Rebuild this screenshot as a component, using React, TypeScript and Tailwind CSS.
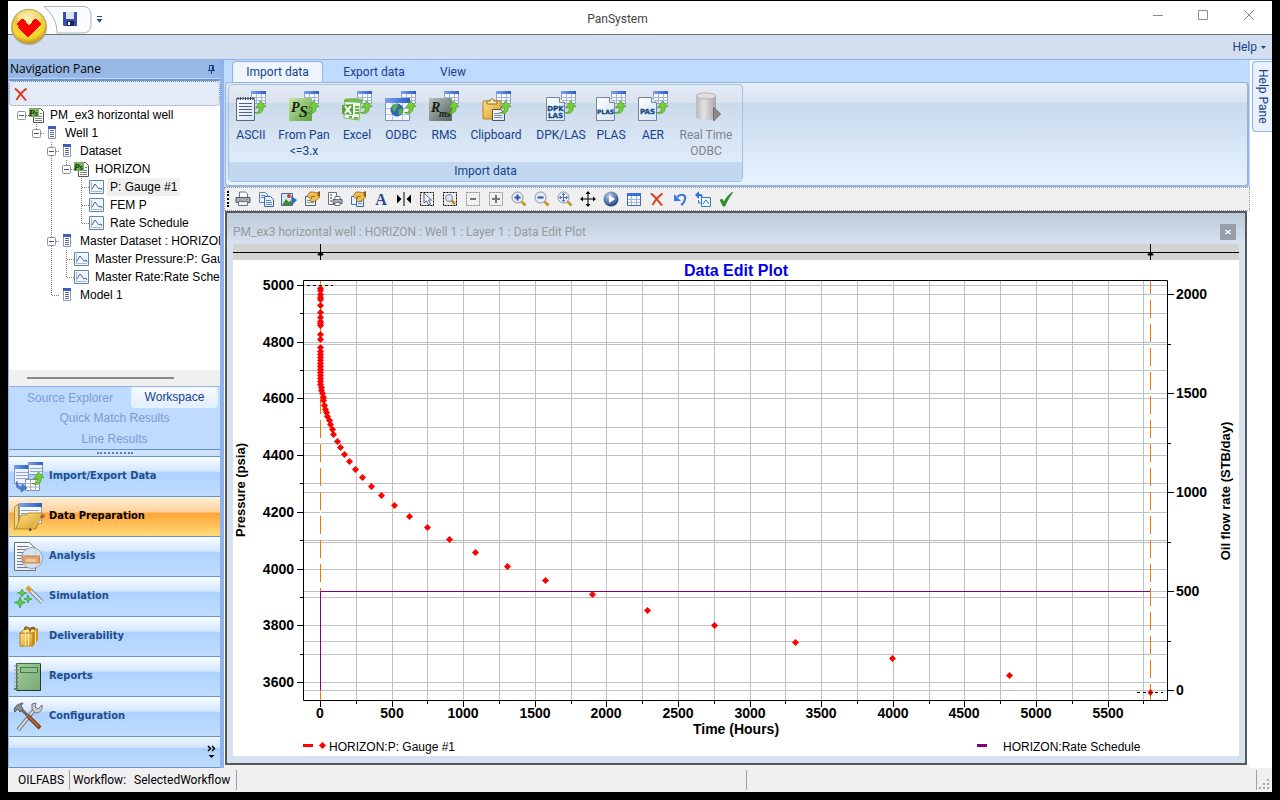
import type { ReactNode } from "react";
import clsx from "clsx";

const UI = "font-['Roboto','Noto_Sans',sans-serif]";
const ARIAL = "font-['Liberation_Sans',Arial,sans-serif]";

type IconProps = { children: ReactNode; size?: number; className?: string };

function Svg({ children, size = 16, className }: IconProps) {
  return (
    <svg
      viewBox={`0 0 ${size} ${size}`}
      width={size}
      height={size}
      aria-hidden="true"
      className={clsx("block shrink-0", className)}
    >
      {children}
    </svg>
  );
}

/* ---------- shared gradients ---------- */

function Gradients() {
  return (
    <svg width="0" height="0" className="absolute" aria-hidden="true">
      <defs>
        <radialGradient id="orb" cx="0.45" cy="0.3" r="0.7">
          <stop offset="0" stopColor="#fff3a8" />
          <stop offset="0.45" stopColor="#e9c93c" />
          <stop offset="0.75" stopColor="#f4d92c" />
          <stop offset="1" stopColor="#c98f1c" />
        </radialGradient>
        <linearGradient id="green" x1="0" y1="0" x2="1" y2="1">
          <stop offset="0" stopColor="#c4e6a4" />
          <stop offset="1" stopColor="#5da042" />
        </linearGradient>
        <linearGradient id="slate" x1="0" y1="0" x2="1" y2="1">
          <stop offset="0" stopColor="#b4c0bc" />
          <stop offset="1" stopColor="#53635e" />
        </linearGradient>
        <linearGradient id="gold" x1="0" y1="0" x2="1" y2="1">
          <stop offset="0" stopColor="#ffe28a" />
          <stop offset="1" stopColor="#d79a1c" />
        </linearGradient>
        <linearGradient id="sheet" x1="0" y1="0" x2="1" y2="1">
          <stop offset="0" stopColor="#ffffff" />
          <stop offset="1" stopColor="#d5e2f3" />
        </linearGradient>
        <linearGradient id="head" x1="0" y1="0" x2="1" y2="0">
          <stop offset="0" stopColor="#7ba2ee" />
          <stop offset="1" stopColor="#2c5cc6" />
        </linearGradient>
        <linearGradient id="drum" x1="0" y1="0" x2="1" y2="0">
          <stop offset="0" stopColor="#b9b9b9" />
          <stop offset="0.4" stopColor="#e2e2e2" />
          <stop offset="1" stopColor="#a5a5a5" />
        </linearGradient>
        <linearGradient id="notebook" x1="0" y1="0" x2="1" y2="1">
          <stop offset="0" stopColor="#a3cb9b" />
          <stop offset="1" stopColor="#79a878" />
        </linearGradient>
        <radialGradient id="ball" cx="0.4" cy="0.3" r="0.7">
          <stop offset="0" stopColor="#bcd0ec" />
          <stop offset="1" stopColor="#1f427e" />
        </radialGradient>
      </defs>
    </svg>
  );
}

/* ---------- ribbon icons, 32 x 32 ---------- */

function TableBack() {
  return (
    <>
      <path d="M16.500 1.500h14v12h-14z" fill="#f4f8ff" stroke="#8d9fc4" />
      <path d="M16 1h15v3H16z" fill="url(#head)" />
      <path d="M16 7.500h15M16 10.500h15M21.500 4v10M26.500 4v10" stroke="#a7b4d2" fill="none" />
    </>
  );
}

function GreenArrow() {
  return (
    <path
      d="M19.500 22.500c4 .5 5-1.500 4.700-5l-3.700.5 5-7 5.500 5.500-3 .5c.5 5-3 8-8.500 5.500z"
      fill="#76d035"
      stroke="#3f9420"
      strokeWidth="0.7"
    />
  );
}

function Page({ lines }: { lines: string[] }) {
  return (
    <>
      <path d="M1.500 7.500h13l5 5v18h-18z" fill="url(#sheet)" stroke="#74849b" />
      <path d="M14.500 7.500v5h5" fill="#e6edf8" stroke="#74849b" />
      {lines.map((line, i) => (
        <text
          key={line}
          x="10.500"
          y={lines.length > 1 ? 21 + i * 7 : 24}
          textAnchor="middle"
          fontFamily="DejaVu Sans, sans-serif"
          fontWeight="700"
          fontSize={line.length > 3 ? 6 : 7}
          fill="#0c4a7e"
          stroke="#0c4a7e"
          strokeWidth="0.3"
        >
          {line}
        </text>
      ))}
    </>
  );
}

function Badge({ fill, first, rest }: { fill: string; first: string; rest: string }) {
  return (
    <>
      <rect x="1" y="8" width="23" height="23" rx="1" fill={fill} />
      <text x="3" y="22" fontFamily="Liberation Serif, serif" fontStyle="italic" fontWeight="700" fontSize="14" fill="#142016">
        {first}
      </text>
      <text x="11" y="27" fontFamily="Liberation Serif, serif" fontStyle="italic" fontWeight="700" fontSize={rest.length > 1 ? 10 : 16} fill="#142016">
        {rest}
      </text>
    </>
  );
}

const ribbonItems: { lines: string[]; width: string; disabled?: boolean; icon: ReactNode }[] = [
  {
    lines: ["ASCII"],
    width: "w-9",
    icon: (
      <>
        <TableBack />
        <path d="M1.500 8.500h18v22h-18z" fill="url(#sheet)" stroke="#5a6880" />
        <path d="M3 7v3M5.500 7v3M8 7v3M10.500 7v3M13 7v3M15.500 7v3M18 7v3" stroke="#33435e" />
        <path d="M4 13.500h13M4 16.500h13M4 19.500h13M4 22.500h13M4 25.500h13" stroke="#4f6183" />
        <GreenArrow />
      </>
    ),
  },
  {
    lines: ["From Pan", "<=3.x"],
    width: "w-[70px]",
    icon: (
      <>
        <TableBack />
        <Badge fill="url(#green)" first="P" rest="S" />
        <GreenArrow />
      </>
    ),
  },
  {
    lines: ["Excel"],
    width: "w-9",
    icon: (
      <>
        <TableBack />
        <path d="M4 9l16 2-2 19-15-2z" fill="#eef7e8" stroke="#7ab860" />
        <path d="M3 10c6-3 12-1 19-1l-1 4-18-1z" fill="#73b851" />
        <path d="M1 15l11-1v11L1 24z" fill="#5aa43c" />
        <path d="M4 16l6 8M10 16l-6 7" stroke="#fff" strokeWidth="2" />
        <path d="M14 17h4M14 20h4M14 23h4M8 27h3M13 28h4" stroke="#6cae4b" strokeWidth="2" />
        <GreenArrow />
      </>
    ),
  },
  {
    lines: ["ODBC"],
    width: "w-[52px]",
    icon: (
      <>
        <TableBack />
        <path d="M.5 8.500h24v22H.5z" fill="#f1f5fc" stroke="#8493b2" />
        <path d="M0 8h25v5H0z" fill="url(#head)" />
        <path d="M1 18.500h23M1 24.500h23M7.500 13v17M17.500 13v17" stroke="#b7c4dc" />
        <circle cx="12" cy="20" r="6.500" fill="#2f62b8" />
        <path d="M7 17c2-4 5-4 6-2s-2 2-2 4-2 3-3 2zM13 20l4-2 1 4-4 4z" fill="#56b23a" />
        <GreenArrow />
      </>
    ),
  },
  {
    lines: ["RMS"],
    width: "w-[34px]",
    icon: (
      <>
        <TableBack />
        <Badge fill="url(#slate)" first="R" rest="ms" />
        <GreenArrow />
      </>
    ),
  },
  {
    lines: ["Clipboard"],
    width: "w-[70px]",
    icon: (
      <>
        <TableBack />
        <rect x="3" y="11" width="18" height="18" rx="1" fill="url(#gold)" stroke="#b77e18" />
        <path d="M7 14v-3h3c0-3 4-3 4 0h3v3z" fill="#efe3b6" stroke="#8b7428" />
        <path d="M12.500 19.500h8l4 4v7h-12z" fill="url(#sheet)" stroke="#4c5463" />
        <path d="M14 23.500h6M14 25.500h8M14 27.500h8" stroke="#7c8ca6" />
        <GreenArrow />
      </>
    ),
  },
  { lines: ["DPK/LAS"], width: "w-[60px]", icon: (<><TableBack /><Page lines={["DPK", "LAS"]} /><GreenArrow /></>) },
  { lines: ["PLAS"], width: "w-10", icon: (<><TableBack /><Page lines={["PLAS"]} /><GreenArrow /></>) },
  { lines: ["AER"], width: "w-11", icon: (<><TableBack /><Page lines={["PAS"]} /><GreenArrow /></>) },
  {
    lines: ["Real Time", "ODBC"],
    width: "w-[62px]",
    disabled: true,
    icon: (
      <>
        <path d="M6 6v21c0 4 20 4 20 0V6z" fill="url(#drum)" />
        <ellipse cx="16" cy="6" rx="10" ry="3" fill="#dedede" stroke="#b4b4b4" />
        <path d="M23.500 17v14l7-7z" fill="#8a8a8a" stroke="#6f6f6f" />
      </>
    ),
  },
];

/* ---------- tool strip icons, 16 x 16 ---------- */

function Loupe({ children }: { children: ReactNode }) {
  return (
    <>
      <path d="M10.500 10.500l4 4" stroke="#c99a2c" strokeWidth="3" />
      <circle cx="6.500" cy="6.500" r="5.500" fill="#e4edfb" stroke="#8792a8" />
      {children}
    </>
  );
}

function Grid() {
  return (
    <>
      <path d="M1.500 2.500h13v12h-13z" fill="#f3f7ff" stroke="#49669f" />
      <path d="M1 2h14v3H1z" fill="#3b6fd6" />
      <path d="M2 8.500h12M2 11.500h12M5.500 5v9M10.500 5v9" stroke="#9fb4dc" />
    </>
  );
}

const Cross = () => (
  <path d="M2 2.500c4 3 7 7 11 12M13.500 2.500C9 6 6 9 3.500 14" fill="none" stroke="#dd3a1c" strokeWidth="2" />
);
const CopyPages = () => (
  <>
    <path d="M1.500 1.500h6l2 2v8h-8z" fill="#eaf2ff" stroke="#5d7fc4" />
    <path d="M6.500 5.500h6l3 3v7h-9z" fill="#eaf2ff" stroke="#3c64b4" />
    <path d="M3 4.500h4M3 6.500h3M8 9.500h5M8 11.500h6M8 13.500h6" stroke="#5d86d6" />
  </>
);
const Hand = () => (
  <>
    <path d="M3 5l3-4h4l3 1 3-1v5l-5 4-3 1-2-2 2-2H5z" fill="#eec04c" stroke="#8e6a1c" strokeWidth="0.800" />
    <path d="M7 6l4-1M14 1h2v4h-2z" stroke="#7c4a14" strokeWidth="0.800" fill="#c85a2c" />
  </>
);
const Marquee = ({ color }: { color: string }) => (
  <path d="M1.500 1.500h13v13h-13z" fill="none" stroke={color} strokeDasharray="2 1" />
);
const Printer = () => (
  <>
    <path d="M4.500 1h6l2 2v4h-8z" fill="#fff" stroke="#70757d" />
    <path d="M1 6.500h14v5H1z" fill="#a7adb6" stroke="#555b63" />
    <path d="M3.500 10.500h9v4h-9z" fill="#eff1f4" stroke="#6e747c" />
    <path d="M11 8.500h2" stroke="#4cb648" />
  </>
);

const tools: { name: string; icon: ReactNode }[] = [
  { name: "Print", icon: <Printer /> },
  { name: "Copy", icon: <CopyPages /> },
  {
    name: "Export image",
    icon: (
      <>
        <path d="M.5 2.500h11v12H.5z" fill="#d7e6fb" stroke="#4d67a0" />
        <path d="M1 14l4-6 3 3 2-2 2 5z" fill="#3f8b2d" />
        <circle cx="8" cy="5" r="2" fill="#c8442c" />
        <path d="M10 5l6 4-5 5z" fill="#3865c4" />
      </>
    ),
  },
  {
    name: "Properties",
    icon: (
      <>
        <path d="M1.500 5.500h10v9h-10z" fill="#f0f3f8" stroke="#555f70" />
        <path d="M3 9.500h6M3 11.500h7" stroke="#7c879a" />
        <Hand />
      </>
    ),
  },
  {
    name: "Print setup",
    icon: (
      <>
        <path d="M1.500 1.500h8v12h-8z" fill="#fff" stroke="#69717e" />
        <path d="M3 4h2M3 7h2M3 10h2" stroke="#333" />
        <path d="M6 8.500h9v4H6z" fill="#a7adb6" stroke="#555b63" />
        <path d="M8 5.500h5v3H8zM8 11.500h5v3H8z" fill="#fff" stroke="#6e747c" />
      </>
    ),
  },
  {
    name: "Copy properties",
    icon: (
      <>
        <path d="M1.500 5.500h8v8h-8z" fill="#e8f0ff" stroke="#4a6fb8" />
        <path d="M6.500 7.500h7v8h-7z" fill="#e8f0ff" stroke="#3c64b4" />
        <path d="M8 10.500h4M8 12.500h4" stroke="#5d86d6" />
        <Hand />
      </>
    ),
  },
  {
    name: "Text",
    icon: (
      <text x="8" y="14" textAnchor="middle" fontFamily="Liberation Serif, serif" fontWeight="700" fontSize="16" fill="#27488c">
        A
      </text>
    ),
  },
  {
    name: "Split",
    icon: <path d="M7.500 1h1v14h-1zM1 3.500v9L5.500 8zM15 3.500v9L10.500 8z" fill="#000" />,
  },
  {
    name: "Select",
    icon: (
      <>
        <Marquee color="#000" />
        <path d="M5 2v10l2.500-2 2 4 2-1-2-4h3z" fill="#fff" stroke="#4a6288" />
      </>
    ),
  },
  {
    name: "Zoom area",
    icon: (
      <>
        <Marquee color="#000" />
        <path d="M9 9l4 4" stroke="#c9872c" strokeWidth="3" />
        <circle cx="7" cy="7" r="3.500" fill="#dbe7f7" stroke="#7b8696" />
      </>
    ),
  },
  { name: "Remove area", icon: (<><Marquee color="#8a8a8a" /><path d="M5 8h6" stroke="#777" strokeWidth="2" /></>) },
  { name: "Add area", icon: (<><Marquee color="#8a8a8a" /><path d="M4 8h8M8 4v8" stroke="#777" strokeWidth="2" /></>) },
  { name: "Zoom in", icon: <Loupe><path d="M3.500 6.500h6M6.500 3.500v6" stroke="#33539c" strokeWidth="2" /></Loupe> },
  { name: "Zoom out", icon: <Loupe><path d="M3.500 6.500h6" stroke="#33539c" strokeWidth="2" /></Loupe> },
  {
    name: "Zoom all",
    icon: (
      <Loupe>
        <path d="M2 6.500h9M6.500 2v9M5 3.500h3M5 9.500h3M3.500 5v3M9.500 5v3" stroke="#5a73ab" />
      </Loupe>
    ),
  },
  {
    name: "Pan",
    icon: (
      <path
        d="M7.500 3H5.500L8 0l2.500 3h-2v4.500H13v-2L16 8l-3 2.500v-2H8.500V13h2L8 16l-2.500-3h2V8.500H3v2L0 8l3-2.500v2h4.500z"
        fill="#000"
      />
    ),
  },
  {
    name: "Play",
    icon: (
      <>
        <circle cx="8" cy="8" r="7.500" fill="url(#ball)" />
        <path d="M6 4v8l6-4z" fill="#fff" />
      </>
    ),
  },
  { name: "Table", icon: <Grid /> },
  { name: "Delete", icon: <Cross /> },
  {
    name: "Undo",
    icon: (
      <>
        <path d="M5 6c5-4 9-2 8 2-.5 3-2 5-4 6" fill="none" stroke="#3d78dc" strokeWidth="2" />
        <path d="M2 3v7h7z" fill="#3d78dc" />
      </>
    ),
  },
  {
    name: "Revert plot",
    icon: (
      <>
        <path d="M6.500 6.500h9v9h-9z" fill="#eef6ff" stroke="#3f79b8" />
        <path d="M8 13l3-4 3 4" fill="none" stroke="#3f79b8" />
        <path d="M0 4l4-4v3c4 0 4 2 3 4-1-2-2-2-3-2v3z" fill="#2f6fdc" />
        <path d="M3.500 9v3H6" fill="none" stroke="#2f6fdc" />
      </>
    ),
  },
  {
    name: "Accept",
    icon: <path d="M2 9l2-1 2 3c2-4 5-8 9-10-3 4-6 9-8 14H5z" fill="#279524" stroke="#176f16" strokeWidth="0.500" />,
  },
];

/* ---------- tree ---------- */

type Cell = "blank" | "line" | "tee" | "end" | "boxLast" | "boxRoot" | "boxMid";
type NodeIcon = "project" | "list" | "plot";

const tree: { label: string; cells: Cell[]; icon: NodeIcon; selected?: boolean }[] = [
  { label: "PM_ex3 horizontal well", cells: ["boxRoot"], icon: "project" },
  { label: "Well 1", cells: ["blank", "boxLast"], icon: "list" },
  { label: "Dataset", cells: ["blank", "blank", "boxMid"], icon: "list" },
  { label: "HORIZON", cells: ["blank", "blank", "line", "boxLast"], icon: "project" },
  { label: "P: Gauge #1", cells: ["blank", "blank", "line", "blank", "tee"], icon: "plot", selected: true },
  { label: "FEM P", cells: ["blank", "blank", "line", "blank", "tee"], icon: "plot" },
  { label: "Rate Schedule", cells: ["blank", "blank", "line", "blank", "end"], icon: "plot" },
  { label: "Master Dataset : HORIZON", cells: ["blank", "blank", "boxMid"], icon: "list" },
  { label: "Master Pressure:P: Gauge #1", cells: ["blank", "blank", "line", "tee"], icon: "plot" },
  { label: "Master Rate:Rate Schedule", cells: ["blank", "blank", "line", "end"], icon: "plot" },
  { label: "Model 1", cells: ["blank", "blank", "end"], icon: "list" },
];

function TreeCell({ kind }: { kind: Cell }) {
  const isBox = kind.startsWith("box");
  return (
    <svg width="15" height="18" viewBox="0 0 15 18" className="block shrink-0" aria-hidden="true">
      <g stroke="#808080" strokeDasharray="1 1" fill="none">
        {kind !== "blank" && kind !== "boxRoot" && <path d="M7.500 0v9" />}
        {(kind === "line" || kind === "tee" || kind === "boxMid") && <path d="M7.500 10v8" />}
        {kind !== "blank" && kind !== "line" && <path d="M8 9.500h7" />}
      </g>
      {isBox && (
        <>
          <rect x="3.500" y="5.500" width="8" height="8" rx="1" fill="#fff" stroke="#919191" />
          <path d="M5 9.500h5" stroke="#3a55a0" />
        </>
      )}
    </svg>
  );
}

function TreeIcon({ kind }: { kind: NodeIcon }) {
  if (kind === "project") {
    return (
      <Svg>
        <path d="M4.500 1.500h7l3 3v11h-10z" fill="#fff" stroke="#555" />
        <path d="M6 9.500h7M6 11.500h7M6 13.500h7M11 6.500h2" stroke="#7b8a7a" />
        <path d="M0 1h10v9H0z" fill="#79b45c" />
        <text x="0" y="9" fontFamily="Liberation Serif, serif" fontStyle="italic" fontWeight="700" fontSize="9" fill="#12300c">
          Ps
        </text>
      </Svg>
    );
  }
  if (kind === "list") {
    return (
      <Svg>
        <path d="M4.500 1.500h7v12h-7z" fill="#fff" stroke="#8d98b4" />
        <path d="M4 1h8v3H4z" fill="#3e5fc0" />
        <path d="M6 5.500h4M6 7.500h4M6 9.500h4M6 11.500h4" stroke="#5e6c8c" />
      </Svg>
    );
  }
  return (
    <Svg>
      <path d="M.5 1.500h14v13H.5z" fill="#f2f8ff" stroke="#5f8a94" />
      <path d="M2.500 3v9.500H13" fill="none" stroke="#a6b8d0" />
      <path d="M3 10l3-5 4 5 2-1 1 2" fill="none" stroke="#4a62ac" />
    </Svg>
  );
}

/* ---------- navigation buttons ---------- */

const navItems: { label: string; active?: boolean; icon: ReactNode }[] = [
  {
    label: "Import/Export Data",
    icon: (
      <>
        <path d="M1.500 4.500h14v18h-14z" fill="#edf3ff" stroke="#7d93c2" />
        <path d="M1 4h15v4H1z" fill="url(#head)" />
        <path d="M15.500 1.500h14v12h-14z" fill="#edf3ff" stroke="#7d93c2" />
        <path d="M15 1h15v3H15z" fill="url(#head)" />
        <path d="M3 11.500h12M3 14.500h12M3 17.500h12M17 7.500h12M17 10.500h12" stroke="#93a6d2" />
        <path d="M12.500 18.500h14v11h-14z" fill="#fff" stroke="#8a8f9c" />
        <path d="M12 22.500h15M12 26h15M17.500 19v11M22.500 19v11" stroke="#a5aab4" />
        <GreenArrow />
        <path d="M4 20c0 4 2 6 5 6v-3l5 4-6 4v-3c-4 0-6-3-4-8z" fill="#4c78d8" stroke="#3156ac" strokeWidth="0.600" />
      </>
    ),
  },
  {
    label: "Data Preparation",
    active: true,
    icon: (
      <>
        <path d="M1.500 6l4-3v22l-4 4z" fill="#ecd587" stroke="#b18d3b" />
        <path d="M6.500 2.500h22v20h-22z" fill="#f7f9ff" stroke="#8d9cc2" />
        <path d="M6 2h23v4H6z" fill="url(#head)" />
        <path d="M8 9.500h18M8 12.500h18" stroke="#8f9ec4" />
        <path d="M3 28l5-14h5l2-2h14l-6 16z" fill="url(#gold)" stroke="#b78a27" />
        <path d="M18 28l11-12" stroke="#e1b35c" strokeWidth="3" />
        <path d="M28 17l3-3" stroke="#9a604c" strokeWidth="3" />
        <path d="M16 30l3-1-2-2z" fill="#222" />
      </>
    ),
  },
  {
    label: "Analysis",
    icon: (
      <>
        <path d="M1.500 1.500h15l6 6v22h-21z" fill="url(#sheet)" stroke="#66707e" />
        <path d="M4 5.500h11M4 8.500h9M4 11.500h7M4 14.500h5M4 17.500h5M4 20.500h5M4 23.500h6M4 26.500h14" stroke="#6f7c90" />
        <circle cx="19" cy="17" r="10.500" fill="#d3e2f2" fillOpacity="0.900" stroke="#9aa2ac" />
        <path d="M9.500 15h17v7h-16z" fill="#e6a46d" stroke="#c4834f" />
        <path d="M13 18h10v3H13z" fill="#f2c79b" />
      </>
    ),
  },
  {
    label: "Simulation",
    icon: (
      <>
        <path d="M14 6l15 15" stroke="#7c8795" strokeWidth="4" />
        <path d="M14 6l15 15" stroke="#e8edf2" strokeWidth="2" />
        <path d="M14 6l4 4" stroke="#e3a02c" strokeWidth="4" />
        <path
          d="M9 8l1.500 3 3 1-3 1L9 16l-1.500-3-3-1 3-1zM7 16l1.500 4 4 1.500-4 1.500L7 27l-1.500-4-4-1.500 4-1.500zM15 14l1 3 3 1-3 1-1 3-1-3-3-1 3-1z"
          fill="#5ad048"
          stroke="#2c8f2a"
          strokeWidth="0.600"
        />
      </>
    ),
  },
  {
    label: "Deliverability",
    icon: (
      <>
        <path d="M7 12l5-4h13v11l-5 6H7z" fill="#cf9317" />
        <path d="M7 12h13v13H7z" fill="url(#gold)" stroke="#b87e12" />
        <path d="M7 12l5-4h13l-5 4z" fill="#ffe59a" stroke="#b87e12" />
        <path d="M12.500 12v13M15.500 12v13M16 8l-4 4M22.500 10v12" stroke="#f7edc0" />
        <path d="M12 9c-1-4 4-3 5 0 1-3 6-3 4 0" fill="none" stroke="#8b6010" strokeWidth="2" />
      </>
    ),
  },
  {
    label: "Reports",
    icon: (
      <>
        <path d="M3.500 2.500h24v27h-24z" fill="url(#notebook)" stroke="#3f7044" />
        <path d="M27.500 3v26.500H4" fill="none" stroke="#1f3d24" />
        <path d="M7.500 6.500h17v5h-17z" fill="#93c08e" stroke="#3f8048" />
        <path d="M1 5h4M1 9h4M1 13h4M1 17h4M1 21h4M1 25h4M1 28h4" stroke="#6d7772" strokeWidth="2" />
        <path d="M1 5h2M1 9h2M1 13h2M1 17h2M1 21h2M1 25h2" stroke="#fff" />
      </>
    ),
  },
  {
    label: "Configuration",
    icon: (
      <>
        <path d="M22 8L5 29" stroke="#676f77" strokeWidth="4" />
        <path d="M22 8L5 29" stroke="#d5d9dc" strokeWidth="2" />
        <path d="M19 3l4-1-1 4 3 2 4-4c1 5-2 8-7 8l-3-4z" fill="#c9ced2" stroke="#6b737a" />
        <path d="M7 7l10 10" stroke="#6f6558" strokeWidth="3" />
        <path d="M15 15l12 12" stroke="#713319" strokeWidth="4" />
        <path d="M15 15l11 11" stroke="#b8683d" strokeWidth="2" />
        <path d="M1 9c1-4 4-6 9-7L8 5l2 3-3 3-2-3-3 3z" fill="#8c9196" stroke="#4d5358" />
      </>
    ),
  },
];

/* ---------- chart ---------- */

const px = (hours: number) => 87 + hours * 0.1432;
const py = (psia: number) => 41 + (5000 - psia) * 0.2835;
const qy = (rate: number) => 446 - rate * 0.198;
const range = (from: number, to: number, step: number) =>
  Array.from({ length: Math.floor((to - from) / step) + 1 }, (_, i) => from + i * step);

// gauge readings, already in plot units
const gauge: [number, number][] = [
  ...[44, 46, 50, 53, 55, 61, 68, 73, 77, 79, 81, 90, 95, 103].map((y): [number, number] => [87, y]),
  ...range(107, 140, 3).map((y): [number, number] => [87, y]),
  [88, 143], [88, 146], [89, 149], [90, 153], [90, 156], [91, 161], [92, 165], [93, 168], [94, 172],
  [96, 176], [97, 180], [99, 185], [100, 190], [104, 197], [107, 203], [111, 210], [116, 217],
  [122, 225], [129, 233], [138, 242], [148, 251], [161, 261], [176, 272], [194, 283],
  [216, 295], [242, 308], [274, 322], [312, 336], [359, 350], [414, 366], [481, 381],
  [562, 398], [659, 414], [776, 431],
];

function DataEditPlot() {
  return (
    <svg
      viewBox="0 0 1006 512"
      role="img"
      aria-label="Data Edit Plot"
      className="block h-auto w-full bg-white"
      fontFamily="Liberation Sans, Arial, sans-serif"
    >
      <rect width="1006" height="16" fill="#d3d3d3" />
      <path d="M0 8.500h1006M87.500 0v16M917.500 0v16" stroke="#000" />
      <path d="M85 11h5v-1h-1l-1-2h-1l-1 2h-1zM915 11h5v-1h-1l-1-2h-1l-1 2h-1z" fill="#000" stroke="#000" />

      <text x="503" y="32" textAnchor="middle" fontWeight="700" fontSize="16" fill="#0000e6">
        Data Edit Plot
      </text>

      <g stroke="#c0c0c0" shapeRendering="crispEdges">
        {range(250, 5750, 250).map((h) => (
          <path key={h} d={`M${Math.round(px(h)) + 0.5} 37v419`} />
        ))}
        {range(3600, 5000, 100).map((p) => (
          <path key={p} d={`M71 ${Math.round(py(p)) + 0.5}h863`} />
        ))}
        {range(0, 2000, 250).map((r) => (
          <path key={r} d={`M71 ${Math.round(qy(r)) + 0.5}h863`} />
        ))}
      </g>

      {[87.5, 917.5].map((x) => (
        <g key={x}>
          <path d={`M${x} 37v419`} stroke="#fff" />
          <path d={`M${x} 37v419`} stroke="#e87c00" strokeDasharray="18 6" strokeDashoffset="5" />
        </g>
      ))}
      <path d="M87.500 446V347.500H917" fill="none" stroke="#800080" />
      <path d="M70.500 36.500h864v420h-864z" fill="none" stroke="#000" />

      <g fill="#ff0000">
        {gauge.map(([x, y], i) => (
          <path key={i} d={`M${x + 0.5} ${y - 3}l3.500 3.500-3.500 3.500-3.500-3.500z`} />
        ))}
        <path d="M917.500 445l3 3.500-3 3.500-3-3.500z" />
      </g>
      <path d="M74 41.500h26M904 448.500h26" stroke="#000" strokeDasharray="3 3" />

      <g stroke="#000" shapeRendering="crispEdges">
        {range(3600, 5000, 100).map((p) => (
          <path key={p} d={`M${p % 200 ? 67 : 64} ${Math.round(py(p)) + 0.5}H70`} />
        ))}
        {range(0, 2000, 250).map((r) => (
          <path key={r} d={`M935 ${Math.round(qy(r)) + 0.5}h${r % 500 ? 3 : 6}`} />
        ))}
        {range(0, 5750, 250).map((h) => (
          <path key={h} d={`M${Math.round(px(h)) + 0.5} 457v${h % 500 ? 3 : 6}`} />
        ))}
      </g>

      <g fontWeight="700" fontSize="14" fill="#000">
        {range(3600, 5000, 200).map((p) => (
          <text key={p} x="61" y={Math.round(py(p)) + 5} textAnchor="end">
            {p}
          </text>
        ))}
        {range(0, 2000, 500).map((r) => (
          <text key={r} x="943" y={Math.round(qy(r)) + 5}>
            {r}
          </text>
        ))}
        {range(0, 5500, 500).map((h) => (
          <text key={h} x={Math.round(px(h))} y="474" textAnchor="middle">
            {h}
          </text>
        ))}
        <text x="503" y="490" textAnchor="middle">
          Time (Hours)
        </text>
        <text transform="translate(12 246) rotate(-90)" textAnchor="middle" fontSize="13">
          Pressure (psia)
        </text>
        <text transform="translate(997 247) rotate(-90)" textAnchor="middle" fontSize="13">
          Oil flow rate (STB/day)
        </text>
      </g>

      <path d="M70 500h10v3H70z" fill="#ff0000" />
      <path d="M89.500 498l3.500 3.500-3.500 3.500-3.500-3.500z" fill="#ff0000" />
      <path d="M744 500h10v3h-10z" fill="#800080" />
      <g fontSize="12" fill="#000">
        <text x="96" y="507">HORIZON:P: Gauge #1</text>
        <text x="770" y="507">HORIZON:Rate Schedule</text>
      </g>
    </svg>
  );
}

/* ---------- window parts ---------- */

function TitleBar() {
  return (
    <header className="relative flex h-[34px] items-start border-b border-[#5f7876] bg-white">
      <div className="flex w-[105px] shrink-0">
        <svg width="105" height="33" viewBox="0 0 105 33" aria-hidden="true" className="block">
          <path d="M36 5.500h39c6 0 8 4 8 8v10c0 5-3 8.500-8 8.500H49c0-11-5-20-13-26.500z" fill="#fbfcfe" stroke="#a9b3c2" />
          <path d="M55 11h14v14H56l-1-1z" fill="#3c4fb0" />
          <path d="M58 11h8v7h-8z" fill="#dfe5f8" />
          <path d="M59 20h7v5h-7z" fill="#1b2450" />
          <path d="M60 21h2v3h-2z" fill="#fff" />
          <path d="M89 15.500h5" stroke="#1c4a94" />
          <path d="M88.500 18h6l-3 3.500z" fill="#1c4a94" />
        </svg>
      </div>
      <h1 className={clsx(UI, "flex-1 pt-2 text-center text-xs leading-5 text-[#444]")}>PanSystem</h1>
      <div className="flex w-[150px] shrink-0 justify-end">
        <button type="button" aria-label="Minimize" className="flex h-7 w-11 items-center justify-center">
          <Svg><path d="M3 8.500h10" stroke="#8c8c8c" /></Svg>
        </button>
        <button type="button" aria-label="Maximize" className="flex h-7 w-[46px] items-center justify-center">
          <Svg><path d="M3.500 3.500h9v9h-9z" fill="none" stroke="#8c8c8c" /></Svg>
        </button>
        <button type="button" aria-label="Close" className="flex h-7 w-[46px] items-center justify-center">
          <Svg><path d="M3 3l10 10M13 3L3 13" stroke="#8c8c8c" /></Svg>
        </button>
      </div>
      <button type="button" aria-label="Application menu" className="absolute top-1.5 left-0.5 z-10">
        <Svg size={38}>
          <circle cx="19" cy="20" r="18" fill="#a4a9ae" />
          <circle cx="19" cy="19.500" r="17" fill="url(#orb)" stroke="#c5a24c" />
          <ellipse cx="19" cy="10" rx="12" ry="7" fill="#fff" fillOpacity="0.300" />
          <path
            d="M7 16h1v-1h1v-1h1v-1h1v-1h3v1h1v1h1v2h1v1h1v1h2v-1h1v-1h1v-2h1v-1h1v-1h3v1h1v1h1v1h1v1h1v2h-1v1h-1v1h-1v1h-1v1h-1v1h-1v1h-1v1h-1v1h-1v1h-1v1h-1v1h-1v1h-2v-1h-1v-1h-1v-1h-1v-1h-1v-1h-1v-1h-1v-1h-1v-1h-1v-1h-1v-1H9v-1H8v-1H7z"
            fill="#ff0000"
          />
        </Svg>
      </button>
    </header>
  );
}

function NavigationPane() {
  return (
    <aside className="flex w-[215px] shrink-0 flex-col border-r-3 border-l border-[#8fb3ea] bg-[#bfdbff]">
      <div className="flex h-[18px] items-center justify-between bg-[#97b7e4] pr-1 pl-px text-xs text-black">
        <span className="font-['Open_Sans','Noto_Sans',sans-serif]">Navigation Pane</span>
        <button type="button" aria-label="Pin pane">
          <svg width="9" height="9" viewBox="0 0 9 9" className="block">
            <path d="M1 5.500h7M2.500 5V.5h4V5M5.500 1v4M4.500 6v3" fill="none" stroke="#15428b" />
          </svg>
        </button>
      </div>
      <div className="mt-px border-t-2 border-[#6a95d8] bg-white">
        <div className="flex h-[25px] items-center rounded border border-dotted border-[#8a94a6] bg-[#e3ebf8] pl-1">
          <button type="button" aria-label="Delete node">
            <Svg size={16}><g transform="translate(-1 0)"><Cross /></g></Svg>
          </button>
        </div>
        <ul className={clsx(ARIAL, "h-[264px] overflow-hidden pl-[5px] text-xs text-black")}>
          {tree.map((node) => (
            <li key={node.label} className="flex h-[18px] items-center whitespace-nowrap">
              {node.cells.map((cell, i) => (
                <TreeCell key={i} kind={cell} />
              ))}
              <TreeIcon kind={node.icon} />
              <span className={clsx("ml-0.5 px-[3px] leading-[18px]", node.selected && "bg-[#f0f0f0]")}>{node.label}</span>
            </li>
          ))}
        </ul>
        <div className="flex h-4 items-center bg-[#f0f0f0] pr-[46px] pl-[18px]">
          <div className="h-0.5 w-full bg-[#8a8a8a]" />
        </div>
      </div>
      <div className={clsx(ARIAL, "h-[63px] text-xs text-[#7d9bd0]")}>
        <div className="flex h-[22px] items-stretch border-t border-[#8fb3ea] pr-[2px]">
          <button type="button" className="w-[122px]">Source Explorer</button>
          <button
            type="button"
            className="flex-1 rounded-b border-2 border-t-0 border-[#def4ff] bg-gradient-to-b from-[#f7faff] to-[#e6eefb] text-[#15428b]"
          >
            Workspace
          </button>
        </div>
        <button type="button" className="block h-5 w-full">Quick Match Results</button>
        <button type="button" className="block h-[21px] w-full">Line Results</button>
      </div>
      <div className="flex h-2 items-center justify-center border-y border-[#6593cf] bg-[#cfe2fc]">
        <div className="w-9 border-t-2 border-dotted border-[#5580c0]" />
      </div>
      <nav className="flex flex-1 flex-col font-['DejaVu_Sans_Condensed','DejaVu_Sans',sans-serif]">
        {navItems.map((item) => (
          <button
            key={item.label}
            type="button"
            className={clsx(
              "flex h-10 w-full items-center gap-1 border-b border-[#6593cf] pl-1 text-left text-[11px] font-bold",
              item.active
                ? "bg-[linear-gradient(#fff0d8_0%,#ffd19a_38%,#ffa43a_42%,#ffdc78_100%)] text-black"
                : "bg-[linear-gradient(#fafdff_0%,#d3e6ff_36%,#add1ff_40%,#c0ddff_100%)] text-[#204d89]",
            )}
          >
            <Svg size={32}>{item.icon}</Svg>
            {item.label}
          </button>
        ))}
        <div className="flex min-h-[30px] flex-1 items-center justify-end border-b border-[#6593cf] bg-[linear-gradient(#eef6ff_0%,#d3e6ff_34%,#add1ff_38%,#c0ddff_100%)] pr-1">
          <button type="button" aria-label="Configure buttons">
            <svg width="9" height="14" viewBox="0 0 9 14" className="block">
              <path d="M1 1l2.500 2.500L1 6M5 1l2.500 2.500L5 6" fill="none" stroke="#000" strokeWidth="1.500" />
              <path d="M1.500 10h6l-3 3z" fill="#000" />
            </svg>
          </button>
        </div>
      </nav>
    </aside>
  );
}

function Ribbon() {
  return (
    <section className={clsx(UI, "bg-[#bfdbff] text-xs text-[#15428b]")}>
      <div role="tablist" className="flex h-[22px] items-stretch pt-px pl-2">
        <button
          type="button"
          role="tab"
          aria-selected="true"
          className="w-[91px] rounded-t border border-b-0 border-[#8fb3ea] bg-[#eff5fd]"
        >
          Import data
        </button>
        <button type="button" role="tab" aria-selected="false" className="w-[102px]">Export data</button>
        <button type="button" role="tab" aria-selected="false" className="w-14">View</button>
      </div>
      <div className="mr-px ml-px rounded border border-r-2 border-b-2 border-[#95b3e2] bg-[linear-gradient(#e6edf7_0%,#d8e3f0_19%,#c8d9ec_20%,#e7f2ff_100%)] pt-px pb-[3px] pl-0.5">
        <div className="w-[515px] rounded border border-[#a3c3dd] bg-[linear-gradient(#e3eaf4_0%,#dae4f0_18%,#cbdaeb_19%,#dfebf9_80%)]">
          <div className="flex h-[77px] pt-[5px] pl-1">
            {ribbonItems.map((item) => (
              <button
                key={item.lines[0]}
                type="button"
                disabled={item.disabled}
                className={clsx(
                  item.width,
                  "flex shrink-0 flex-col items-center leading-4 whitespace-nowrap",
                  item.disabled && "text-[#7f8489]",
                )}
              >
                <Svg size={32} className="mb-[5px]">{item.icon}</Svg>
                {item.lines.map((line) => (
                  <span key={line}>{line}</span>
                ))}
              </button>
            ))}
          </div>
          <div className="h-[19px] bg-[#c1d8f0] text-center leading-[18px]">Import data</div>
        </div>
      </div>
    </section>
  );
}

function ToolStrip() {
  return (
    <div className="flex h-6 items-center border border-dotted border-[#9a9a9a] bg-[#f0f0f0] pl-0.5">
      <div className="mr-1.5 h-4 border-l-2 border-dotted border-black" />
      <div className="flex gap-[7px]">
        {tools.map((tool) => (
          <button key={tool.name} type="button" aria-label={tool.name}>
            <Svg>{tool.icon}</Svg>
          </button>
        ))}
      </div>
    </div>
  );
}

function PlotWindow() {
  return (
    <section className="mr-[3px] ml-px flex flex-1 flex-col border-2 border-[#55585c] bg-[#d7e2f1] px-1.5 pb-1.5">
      <div className="-mx-1.5 flex h-[31px] items-center justify-between bg-gradient-to-b from-[#bccbd9] to-[#d7e2f1] px-1.5 pt-[7px]">
        <h2 className={clsx(UI, "text-xs text-[#999]")}>
          PM_ex3 horizontal well : HORIZON : Well 1 : Layer 1 : Data Edit Plot
        </h2>
        <button
          type="button"
          aria-label="Close plot"
          className="mr-[3px] flex h-4 w-4 items-center justify-center bg-[#949fab]"
        >
          <Svg size={6}><path d="M.5 1l5 4M5.500 1l-5 4" stroke="#fff" strokeWidth="1.500" /></Svg>
        </button>
      </div>
      <DataEditPlot />
    </section>
  );
}

function StatusBar() {
  return (
    <footer className={clsx(UI, "flex h-6 items-center bg-[#f0f0f0] text-xs leading-5 text-black")}>
      <span className="h-5 w-[62px] border-r border-[#a0a0a0] pl-2.5">OILFABS</span>
      <span className="flex h-5 w-[167px] gap-2 border-r border-[#a0a0a0] pl-[3px] whitespace-nowrap">
        <span>Workflow:</span>
        <span>SelectedWorkflow</span>
      </span>
      <span className="h-5 flex-1 border-r border-[#a0a0a0]" />
      <span className="h-5 flex-1 border-r border-[#a0a0a0]" />
      <span className="flex w-[15px] justify-end self-end pr-0.5 pb-0.5">
        <svg width="11" height="11" viewBox="0 0 11 11" aria-hidden="true">
          <path d="M8 0h2v2H8zM4 4h2v2H4zM8 4h2v2H8zM0 8h2v2H0zM4 8h2v2H4zM8 8h2v2H8z" fill="#a8a8a8" />
        </svg>
      </span>
    </footer>
  );
}

export default function App() {
  return (
    <div className="flex min-h-screen flex-col bg-black px-2 pt-px pb-2">
      <Gradients />
      <TitleBar />
      <div className="flex h-[25px] items-center justify-end border-b border-[#8fb3ea] bg-[#d3deef]">
        <button type="button" className={clsx(UI, "flex items-center gap-1 pr-1.5 text-xs text-[#15428b]")}>
          Help
          <svg width="5" height="3" viewBox="0 0 5 3" aria-hidden="true">
            <path d="M0 0h5L2.500 3z" fill="#15428b" />
          </svg>
        </button>
      </div>
      <div className="flex flex-1 bg-white">
        <NavigationPane />
        <main className="flex min-w-0 flex-1 flex-col border-l border-[#8fb3ea]">
          <Ribbon />
          <ToolStrip />
          <PlotWindow />
          <div className="h-[3px] bg-[#f0f0f0]" />
        </main>
        <div className="w-[22px] shrink-0 pt-px pl-0.5">
          <button
            type="button"
            className={clsx(
              UI,
              "flex h-[71px] w-5 items-center justify-center rounded-l border border-r-0 border-[#8fb3ea] bg-[#e9f1fc] text-xs text-[#15428b] [writing-mode:vertical-rl]",
            )}
          >
            Help Pane
          </button>
        </div>
      </div>
      <StatusBar />
    </div>
  );
}
